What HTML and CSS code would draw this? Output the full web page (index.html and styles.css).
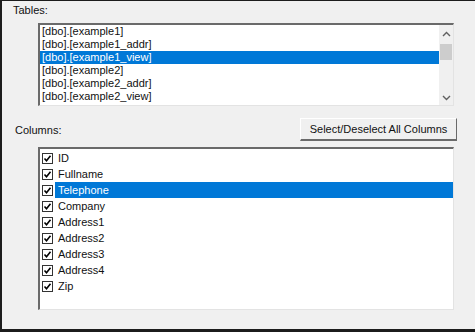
FILE: index.html
```html
<!DOCTYPE html>
<html>
<head>
    <title>Table Columns</title>
    <link rel="stylesheet" href="styles.css">
</head>
<body>
    <div class="window">
        <div class="label tables-label">Tables:</div>
        <div class="listbox tables">
            <div class="items">
                <div class="item">[dbo].[example1]</div>
                <div class="item">[dbo].[example1_addr]</div>
                <div class="item selected">[dbo].[example1_view]</div>
                <div class="item">[dbo].[example2]</div>
                <div class="item">[dbo].[example2_addr]</div>
                <div class="item">[dbo].[example2_view]</div>
            </div>
            <div class="scrollbar">
                <svg class="arrow" width="9" height="6" viewBox="0 0 9 6"><path d="M1 5 L4.5 1.5 L8 5" fill="none" stroke="#606060" stroke-width="1.4"/></svg>
                <div class="track"><div class="thumb"></div></div>
                <svg class="arrow" width="9" height="6" viewBox="0 0 9 6"><path d="M1 1 L4.5 4.5 L8 1" fill="none" stroke="#606060" stroke-width="1.4"/></svg>
            </div>
        </div>

        <div class="columns-head">
            <div class="label">Columns:</div>
            <button class="select-all">Select/Deselect All Columns</button>
        </div>
        <div class="listbox columns">
            <div class="check-row"><span class="box"></span><span class="name">ID</span></div>
            <div class="check-row"><span class="box"></span><span class="name">Fullname</span></div>
            <div class="check-row"><span class="box"></span><span class="name selected">Telephone</span></div>
            <div class="check-row"><span class="box"></span><span class="name">Company</span></div>
            <div class="check-row"><span class="box"></span><span class="name">Address1</span></div>
            <div class="check-row"><span class="box"></span><span class="name">Address2</span></div>
            <div class="check-row"><span class="box"></span><span class="name">Address3</span></div>
            <div class="check-row"><span class="box"></span><span class="name">Address4</span></div>
            <div class="check-row"><span class="box"></span><span class="name">Zip</span></div>
        </div>
    </div>
</body>
</html>
```

FILE: styles.css
```css
body {
    margin: 0;
    font-family: "Liberation Sans", Arial, sans-serif;
    font-size: 11px;
    color: #111;
}
.window {
    width: 475px;
    height: 332px;
    box-sizing: border-box;
    background-color: #f0f0f0;
    border-left: 2px solid #1c1c1c;
    border-top: 1px solid #1c1c1c;
    border-bottom: 3px solid #1c1c1c;
    padding: 2px 0 0 0;
}
.label {
    line-height: 14px;
}
.tables-label {
    margin-left: 11px;
}
.listbox {
    margin-left: 36px;
    width: 416px;
    box-sizing: border-box;
    background-color: #fff;
    border-top: 2px solid #6a6a6a;
    border-left: 2px solid #6a6a6a;
    border-right: 1px solid #e3e3e3;
    border-bottom: 1px solid #e3e3e3;
}
.tables {
    margin-top: 6px;
    height: 83px;
    display: flex;
}
.items {
    flex: 1;
}
.item {
    height: 13px;
    line-height: 13px;
    padding-left: 2px;
    white-space: nowrap;
}
.selected {
    background-color: #0078d7;
    color: #fff;
}
.scrollbar {
    width: 14px;
    background-color: #f0f0f0;
    display: flex;
    flex-direction: column;
    align-items: center;
    padding: 6px 0 4px 0;
}
.track {
    flex: 1;
    width: 100%;
    padding-top: 7px;
}
.thumb {
    width: 12px;
    margin-left: 1px;
    height: 16px;
    background-color: #cdcdcd;
}
.columns-head {
    display: flex;
    justify-content: space-between;
    align-items: center;
    margin-top: 12px;
    padding-left: 13px;
    padding-right: 18px;
}
.select-all {
    font-family: "Liberation Sans", Arial, sans-serif;
    font-size: 11px;
    color: #111;
    white-space: nowrap;
    width: 157px;
    height: 23px;
    padding: 0;
    background-color: #f0f0f0;
    border-top: 1px solid #fff;
    border-left: 1px solid #fff;
    border-right: 1px solid #6a6a6a;
    border-bottom: 2px solid #6a6a6a;
}
.columns {
    margin-top: 6px;
    height: 163px;
    padding-top: 1px;
}
.check-row {
    height: 16px;
    display: flex;
    align-items: center;
    padding-left: 2px;
}
.box {
    width: 9px;
    height: 9px;
    border: 1px solid #333;
    background: #fff url("data:image/svg+xml;utf8,<svg xmlns='http://www.w3.org/2000/svg' width='9' height='9'><path d='M1.5 4.5 L3.5 6.8 L7.5 1.8' fill='none' stroke='black' stroke-width='1.6'/></svg>") no-repeat center;
}
.name {
    margin-left: 2px;
    padding-left: 3px;
    line-height: 16px;
}
.name.selected {
    flex: 1;
}
```
